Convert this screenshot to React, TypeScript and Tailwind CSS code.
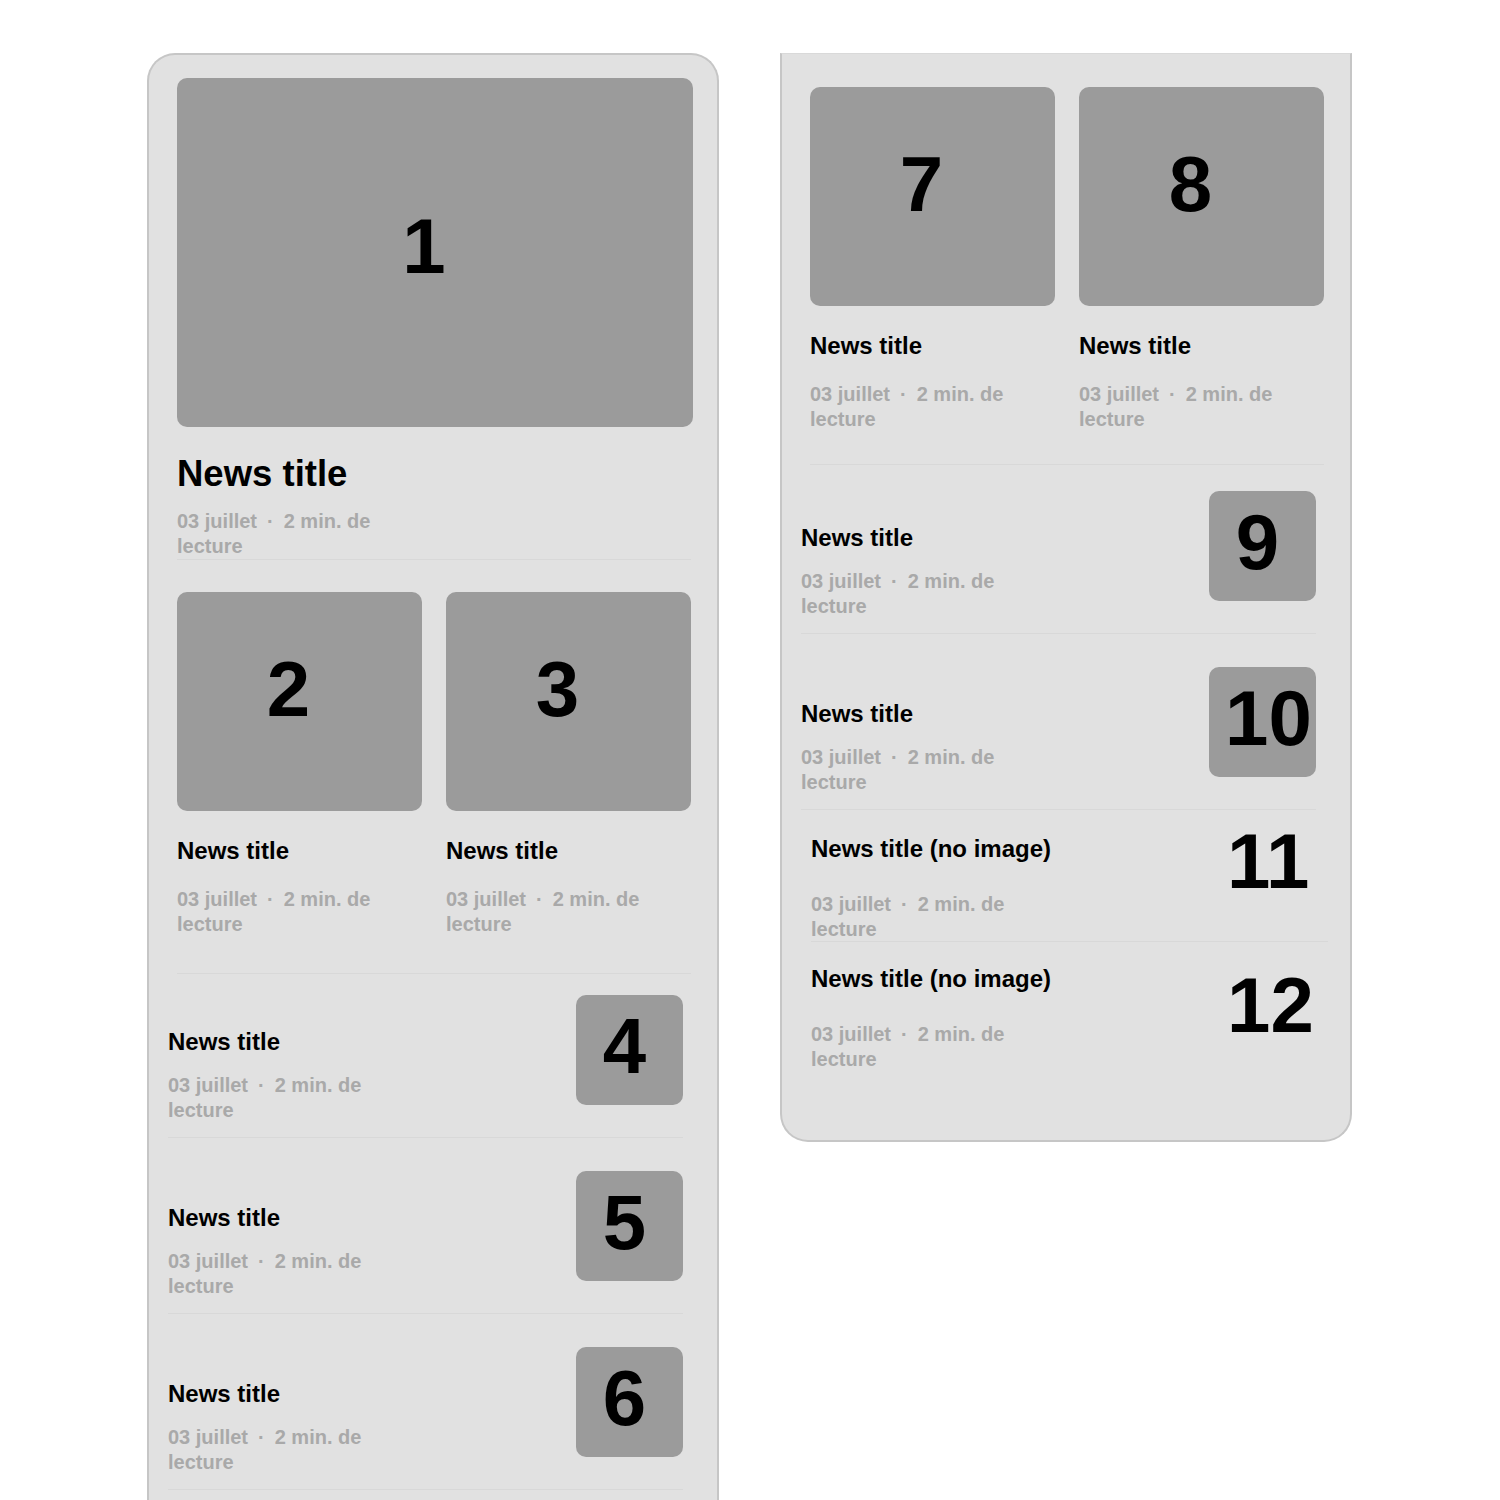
import React from "react";

const FONT = { fontFamily: '"Liberation Sans", Arial, sans-serif' };

interface TileProps {
  n: string;
  className: string;
  shift: string;
}

function Tile({ n, className, shift }: TileProps) {
  return (
    <div className={`flex items-center justify-center rounded-[10px] bg-[#9b9b9b] ${className}`}>
      <span className={`text-[78px] leading-none font-bold text-black ${shift}`}>{n}</span>
    </div>
  );
}

function Meta() {
  return (
    <p className="w-[220px] text-[20px] leading-[25px] font-bold text-[#a9a9a9]">
      {"03 juillet\u2002·\u20022 min. de lecture"}
    </p>
  );
}

function Title({ children, big }: { children: React.ReactNode; big?: boolean }) {
  return (
    <h3
      className={
        big
          ? "text-[36.5px] leading-[43px] font-bold text-black"
          : "text-[24px] leading-[29px] font-bold text-black"
      }
    >
      {children}
    </h3>
  );
}

function Hero() {
  return (
    <div className="pl-[28px] pr-[24px] pt-[23px]">
      <Tile n="1" className="h-[349px] w-full" shift="mr-[22px] mb-[14px]" />
      <div className="mt-[25px] mr-[2px] border-b border-[#d8d8d8]">
        <Title big>News title</Title>
        <div className="mt-[14px]">
          <Meta />
        </div>
      </div>
    </div>
  );
}

function Pair({ a, b, top, bottom }: { a: string; b: string; top: string; bottom: string }) {
  return (
    <div className={`pl-[28px] pr-[26px] ${top}`}>
      <div className={`grid grid-cols-2 gap-[24px] border-b border-[#d8d8d8] ${bottom}`}>
        {[a, b].map((n) => (
          <div key={n}>
            <Tile n={n} className="h-[219px]" shift="mr-[22px] mb-[26px]" />
            <div className="mt-[25px]">
              <Title>News title</Title>
            </div>
            <div className="mt-[22px]">
              <Meta />
            </div>
          </div>
        ))}
      </div>
    </div>
  );
}

// Row with the thumbnail on the right; the text block hangs a little below it
function Row({ n, top }: { n: string; top: string }) {
  return (
    <div className="pl-[19px] pr-[34px]">
      <div className={`flex items-start justify-between border-b border-[#d8d8d8] pb-[32px] ${top}`}>
        <div className="mt-[32px] mb-[-30px]">
          <Title>News title</Title>
          <div className="mt-[17px]">
            <Meta />
          </div>
        </div>
        <Tile
          n={n}
          className="h-[110px] w-[107px] shrink-0"
          shift={n.length > 1 ? "ml-[12px] mb-[8px]" : "mr-[10px] mb-[8px]"}
        />
      </div>
    </div>
  );
}

function TextRow({ n, top, last }: { n: string; top: string; last?: boolean }) {
  return (
    <div className="pl-[29px] pr-[22px]">
      <div className={`flex items-start justify-between ${last ? "" : "border-b border-[#d8d8d8]"} ${top}`}>
        <div className={last ? "" : "mb-[-1px]"}>
          <Title>News title (no image)</Title>
          <div className="mt-[29px]">
            <Meta />
          </div>
        </div>
        <span
          className={`${last ? "mt-[2px]" : "mt-[-12px]"} mr-[11px] w-[90px] text-[78px] leading-none font-bold text-black`}
        >
          {n}
        </span>
      </div>
    </div>
  );
}

export default function App() {
  return (
    <div className="min-h-[1500px] bg-white" style={FONT}>
      <div className="flex items-start gap-[61px] pl-[147px] pt-[53px]">
        <section className="h-[1460px] w-[572px] shrink-0 overflow-hidden rounded-t-[28px] border-2 border-b-0 border-[#c6c6c6] bg-[#e1e1e1]">
          <Hero />
          <Pair a="2" b="3" top="pt-[32px]" bottom="pb-[36px]" />
          <Row n="4" top="pt-[21px]" />
          <Row n="5" top="pt-[33px]" />
          <Row n="6" top="pt-[33px]" />
        </section>

        <section className="w-[572px] shrink-0 rounded-b-[28px] border-x-2 border-b-2 border-t border-[#c6c6c6] border-t-[#d9d9d9] bg-[#e1e1e1] pb-[68px]">
          <Pair a="7" b="8" top="pt-[33px]" bottom="pb-[32px]" />
          <Row n="9" top="pt-[26px]" />
          <Row n="10" top="pt-[33px]" />
          <TextRow n="11" top="pt-[24px]" />
          <TextRow n="12" top="pt-[22px]" last />
        </section>
      </div>
    </div>
  );
}
